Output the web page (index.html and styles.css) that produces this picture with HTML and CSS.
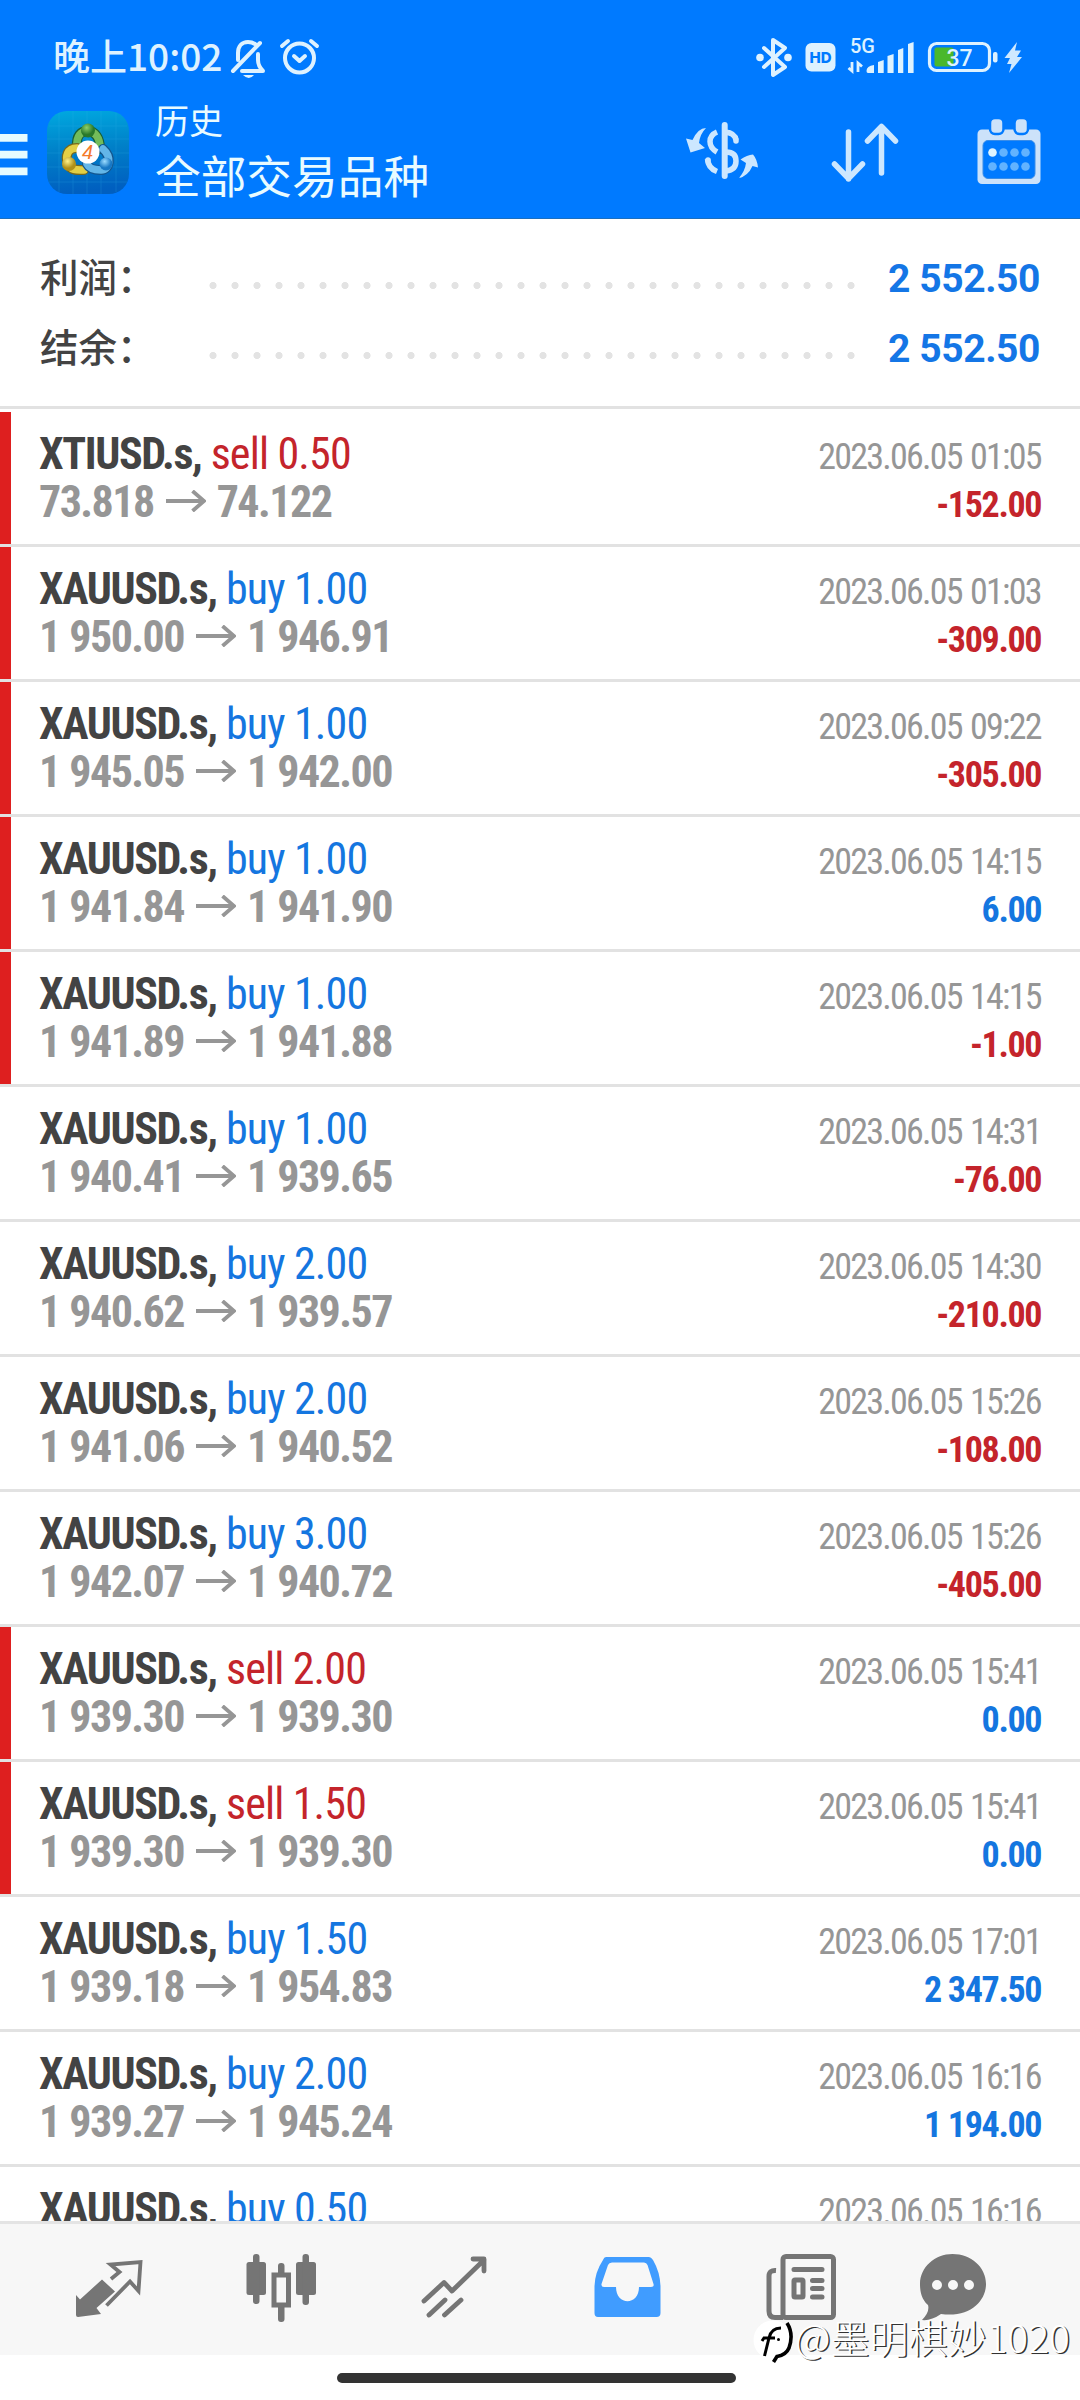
FILE: index.html
```html
<!DOCTYPE html>
<html lang="zh-CN">
<head>
<meta charset="utf-8">
<title>历史</title>
<link rel="stylesheet" href="styles.css">
</head>
<body>
<div class="screen">
  <header class="header">
    <div class="status">
      <span class="clock">晚上10:02</span>
      <svg class="bell" width="38" height="44" viewBox="230 35 38 44" fill="none" stroke="#def2ff" stroke-width="4" stroke-linecap="round" stroke-linejoin="round"><path d="M233 71 260 43M238 60V53C238 46 242 42 248 42Q252 42 255 44M242 71H263Q258 66 258 60V54"/><path d="M243 75H254Q249 81 243 75Z" fill="#def2ff" stroke="none"/></svg>
      <svg class="alarm" width="42" height="44" viewBox="279 35 42 44" fill="none" stroke="#def2ff" stroke-width="4" stroke-linecap="round" stroke-linejoin="round"><circle cx="299.500" cy="58" r="14.500"/><path d="m294 56 5.500 5 5.500-5M282 46 288 41M317 46 311 41"/></svg>
      <svg class="bt" width="38" height="44" viewBox="755 35 38 44" fill="none" stroke="#def2ff" stroke-width="4" stroke-linejoin="round" stroke-linecap="round"><path d="m764 48 21 19-12 8V40l12 8-21 19"/><g fill="#def2ff" stroke="none"><circle cx="760" cy="57.500" r="3.800"/><circle cx="788" cy="57.500" r="3.800"/></g></svg>
      <svg class="hd" width="31" height="44" viewBox="804.500 35 31 44"><rect x="805" y="43" width="30" height="28.500" rx="6" fill="#def2ff"/><text x="820" y="63" text-anchor="middle" class="hd-text">HD</text></svg>
      <svg class="signal" width="68" height="44" viewBox="847 35 68 44" fill="#def2ff"><text x="850" y="53" class="net-text">5G</text><path d="M866.500 71Q866.500 66 874 65V73H868Q866.500 73 866.500 71ZM878 62 883.700 60V73H878ZM887.500 56 893.600 54V73H887.500ZM898 50 903.300 48V73H898ZM908 44 913.600 42V73H908Z"/><path d="M852 62V71L848.500 68M858 72V63L862 66.500" fill="none" stroke="#def2ff" stroke-width="2.800"/></svg>
      <svg class="battery" width="72" height="44" viewBox="927 35 72 44"><rect x="934.500" y="47.500" width="19" height="19" rx="2" fill="#4ab82c"/><rect x="929.500" y="43.500" width="60" height="27" rx="7" fill="none" stroke="#def2ff" stroke-width="3.200"/><rect x="993" y="52" width="4.500" height="10.500" rx="2" fill="#def2ff"/><text x="959.500" y="66" text-anchor="middle" class="bat-text">37</text></svg>
      <svg class="bolt" width="20" height="44" viewBox="1004 35 20 44" fill="#cfe9ff"><path d="M1017 42 1004.500 58H1010L1007 64H1011.500L1009 73 1022 57H1017L1021 50.500H1015Z"/></svg>
    </div>
    <div class="toolbar">
      <svg class="menu" width="28" height="42" viewBox="0 0 28 42" fill="#e6fbff"><path d="M0 0H27.500V7.800H0ZM0 16.800H27.500V24.400H0ZM0 33.600H27.500V41.200H0Z"/></svg>
      <svg class="logo" width="82" height="83" viewBox="0 0 82 83">
        <defs>
          <linearGradient id="bg" x2="0.100" y2="1"><stop stop-color="#00a9e0"/><stop offset=".5" stop-color="#0080c8"/><stop offset="1" stop-color="#005fc0"/></linearGradient>
          <radialGradient id="gr" cx=".4" cy=".3"><stop stop-color="#8fd06a"/><stop offset="1" stop-color="#28792b"/></radialGradient>
          <radialGradient id="ye" cx=".4" cy=".3"><stop stop-color="#fff38a"/><stop offset="1" stop-color="#b09018"/></radialGradient>
          <radialGradient id="bl" cx=".4" cy=".3"><stop stop-color="#9bdcff"/><stop offset="1" stop-color="#1878c4"/></radialGradient>
        </defs>
        <rect width="82" height="83" rx="20" fill="url(#bg)"/>
        <path d="M12 2V81M26 0V83M40 0V83M54 0V83M69 2V81M2 15H80M0 28H82M0 42H82M0 56H82M2 71H80" stroke="#35b5eb" stroke-width=".7" opacity=".3"/>
        <g stroke-linecap="round" fill="none">
          <path d="M30 36C29 24 34 20 41 20S53 27 53 38" stroke="#185f36" stroke-width="10"/>
          <path d="M30 36C29 25 34 20 41 20S53 27 53 37" stroke="#73bc5a" stroke-width="7.500"/>
          <path d="M30 37C20 37 18 46 21 53S31 59 37 59" stroke="#77681d" stroke-width="10"/>
          <path d="M30 37C20 37 18 46 21 53S31 59 37 59" stroke="#e3cf45" stroke-width="7.500"/>
          <path d="M56 38C65 46 63 59 54 59S42 57 40 53" stroke="#14568e" stroke-width="10"/>
          <path d="M56 38C65 46 63 59 54 59S42 57 40 53" stroke="#63b6e8" stroke-width="7.500"/>
        </g>
        <circle cx="41" cy="19.500" r="7" fill="url(#gr)"/><circle cx="22" cy="53" r="7" fill="url(#ye)"/><circle cx="59" cy="53" r="6.500" fill="url(#bl)"/>
        <circle cx="41" cy="41" r="11.500" fill="#fff"/><text x="40.500" y="48" text-anchor="middle" class="logo-text">4</text>
      </svg>
      <div class="titles"><div class="title">历史</div><div class="subtitle">全部交易品种</div></div>
      <svg class="currency" width="74" height="60" viewBox="685 122 74 60" fill="none" stroke="#cce7ff" stroke-width="5.500"><path d="M724.700 126V177" stroke-width="6" stroke-linecap="round"/><path d="M717 133Q710 136 710 142.500T717 153M707.500 160Q708 169 717 172.500M725 133Q735 134 736 141" /><path d="M736 141V142" stroke-linecap="round"/><path d="M708 162V161" stroke-linecap="round"/><path d="M726 153Q736 153 736 162T726 172"/><g fill="#cce7ff" stroke="none"><path d="M706 129Q698 129 692.500 141L686 139.500 690.500 153.500 705 149 699 144Q700 135 706 129Z"/><path d="M739 179Q748 177 752.500 167L758 168.500Q757 160 753 155.500 747 156 740.500 160.500L746 164Q745 172 739 179Z"/></g></svg>
      <svg class="sort" width="70" height="62" viewBox="830 122 70 62" fill="none" stroke="#cce7ff" stroke-width="5.500" stroke-linecap="round" stroke-linejoin="round"><path d="M848.500 132V179M834.500 164 848.500 178.500 862.500 164M881.500 173V127M867.500 141 881.500 126.500 895.500 141"/></svg>
      <svg class="calendar" width="64" height="68" viewBox="976.500 118 64 68"><rect x="977" y="129.500" width="63" height="54.500" rx="4.500" fill="#cce2fa"/><rect x="982.500" y="140.500" width="52" height="38" rx="5" fill="#007aff" stroke="#3a8de8"/><g fill="#cce2fa" stroke="#007aff" stroke-width="2.500"><rect x="989.500" y="118" width="13.500" height="16" rx="5"/><rect x="1014" y="118" width="13.500" height="16" rx="5"/></g><g fill="#62b3ff"><circle cx="1003" cy="152.500" r="4.300"/><circle cx="1014" cy="152.500" r="4.300"/><circle cx="1025" cy="152.500" r="4.300"/><circle cx="992" cy="166.500" r="4.300"/><circle cx="1003" cy="166.500" r="4.300"/><circle cx="1014" cy="166.500" r="4.300"/><circle cx="1025" cy="166.500" r="4.300"/></g><circle cx="992" cy="152.500" r="4.300" fill="#def4ff"/></svg>
    </div>
  </header>

  <section class="summary">
    <div class="sum-row"><span class="sum-label">利润：</span><span class="dots"></span><span class="sum-value">2 552.50</span></div>
    <div class="sum-row"><span class="sum-label">结余：</span><span class="dots"></span><span class="sum-value">2 552.50</span></div>
  </section>

  <svg class="defs" width="0" height="0"><symbol id="arrow" viewBox="0 0 40 22"><path d="M0 11H38M26.500 1 38 11 26.500 21" fill="none" stroke="#969696" stroke-width="3.800"/></symbol></svg>

  <main class="deals">
    <article class="deal marked"><div class="line"><span class="name"><b>XTIUSD.s,</b> <span class="sell">sell 0.50</span></span><time>2023.06.05 01:05</time></div><div class="line"><span class="prices">73.818<svg class="arrow"><use href="#arrow"/></svg>74.122</span><span class="profit loss">-152.00</span></div></article>
    <article class="deal marked"><div class="line"><span class="name"><b>XAUUSD.s,</b> <span class="buy">buy 1.00</span></span><time>2023.06.05 01:03</time></div><div class="line"><span class="prices">1 950.00<svg class="arrow"><use href="#arrow"/></svg>1 946.91</span><span class="profit loss">-309.00</span></div></article>
    <article class="deal marked"><div class="line"><span class="name"><b>XAUUSD.s,</b> <span class="buy">buy 1.00</span></span><time>2023.06.05 09:22</time></div><div class="line"><span class="prices">1 945.05<svg class="arrow"><use href="#arrow"/></svg>1 942.00</span><span class="profit loss">-305.00</span></div></article>
    <article class="deal marked"><div class="line"><span class="name"><b>XAUUSD.s,</b> <span class="buy">buy 1.00</span></span><time>2023.06.05 14:15</time></div><div class="line"><span class="prices">1 941.84<svg class="arrow"><use href="#arrow"/></svg>1 941.90</span><span class="profit">6.00</span></div></article>
    <article class="deal marked"><div class="line"><span class="name"><b>XAUUSD.s,</b> <span class="buy">buy 1.00</span></span><time>2023.06.05 14:15</time></div><div class="line"><span class="prices">1 941.89<svg class="arrow"><use href="#arrow"/></svg>1 941.88</span><span class="profit loss">-1.00</span></div></article>
    <article class="deal"><div class="line"><span class="name"><b>XAUUSD.s,</b> <span class="buy">buy 1.00</span></span><time>2023.06.05 14:31</time></div><div class="line"><span class="prices">1 940.41<svg class="arrow"><use href="#arrow"/></svg>1 939.65</span><span class="profit loss">-76.00</span></div></article>
    <article class="deal"><div class="line"><span class="name"><b>XAUUSD.s,</b> <span class="buy">buy 2.00</span></span><time>2023.06.05 14:30</time></div><div class="line"><span class="prices">1 940.62<svg class="arrow"><use href="#arrow"/></svg>1 939.57</span><span class="profit loss">-210.00</span></div></article>
    <article class="deal"><div class="line"><span class="name"><b>XAUUSD.s,</b> <span class="buy">buy 2.00</span></span><time>2023.06.05 15:26</time></div><div class="line"><span class="prices">1 941.06<svg class="arrow"><use href="#arrow"/></svg>1 940.52</span><span class="profit loss">-108.00</span></div></article>
    <article class="deal"><div class="line"><span class="name"><b>XAUUSD.s,</b> <span class="buy">buy 3.00</span></span><time>2023.06.05 15:26</time></div><div class="line"><span class="prices">1 942.07<svg class="arrow"><use href="#arrow"/></svg>1 940.72</span><span class="profit loss">-405.00</span></div></article>
    <article class="deal marked"><div class="line"><span class="name"><b>XAUUSD.s,</b> <span class="sell">sell 2.00</span></span><time>2023.06.05 15:41</time></div><div class="line"><span class="prices">1 939.30<svg class="arrow"><use href="#arrow"/></svg>1 939.30</span><span class="profit">0.00</span></div></article>
    <article class="deal marked"><div class="line"><span class="name"><b>XAUUSD.s,</b> <span class="sell">sell 1.50</span></span><time>2023.06.05 15:41</time></div><div class="line"><span class="prices">1 939.30<svg class="arrow"><use href="#arrow"/></svg>1 939.30</span><span class="profit">0.00</span></div></article>
    <article class="deal"><div class="line"><span class="name"><b>XAUUSD.s,</b> <span class="buy">buy 1.50</span></span><time>2023.06.05 17:01</time></div><div class="line"><span class="prices">1 939.18<svg class="arrow"><use href="#arrow"/></svg>1 954.83</span><span class="profit">2 347.50</span></div></article>
    <article class="deal"><div class="line"><span class="name"><b>XAUUSD.s,</b> <span class="buy">buy 2.00</span></span><time>2023.06.05 16:16</time></div><div class="line"><span class="prices">1 939.27<svg class="arrow"><use href="#arrow"/></svg>1 945.24</span><span class="profit">1 194.00</span></div></article>
    <article class="deal"><div class="line"><span class="name"><b>XAUUSD.s,</b> <span class="buy">buy 0.50</span></span><time>2023.06.05 16:16</time></div></article>
  </main>

  <nav class="tabs">
    <svg width="70" height="70" viewBox="73 2253 70 70"><path d="M76 2295 80 2299.500 102 2279.500 115 2291.500 96.500 2308 101 2314 78 2317Q76 2317 76 2315Z" fill="#757575"/><path d="m111 2279 8.500-7-9-7.500 30-2.500-2 29-8.500-9.500-23.500 24" fill="none" stroke="#757575" stroke-width="3.800"/></svg>
    <svg width="72" height="70" viewBox="245 2253 72 70" fill="#757575"><rect x="246.500" y="2262" width="19.500" height="33" rx="2.500"/><rect x="253" y="2254" width="6.500" height="50" rx="3"/><rect x="296" y="2262" width="20" height="33" rx="2.500"/><rect x="302.500" y="2254" width="6.500" height="51" rx="3"/><rect x="278" y="2263" width="6.500" height="59" rx="3"/><rect x="274" y="2275" width="14.500" height="30" fill="#f7f7f7" stroke="#757575" stroke-width="5"/></svg>
    <svg width="68" height="70" viewBox="420 2253 68 70" fill="none" stroke="#757575" stroke-width="4.800" stroke-linecap="round" stroke-linejoin="round"><path d="m424 2301 20-18.500 8 8.500 32-31M473 2259H484V2271M429 2315 445 2300M444.500 2315 461 2300"/></svg>
    <svg width="68" height="70" viewBox="593 2253 68 70"><path fill="#409cff" fill-rule="evenodd" d="M606 2257H649Q651 2257 653 2260 660 2272 660.500 2286V2313Q660.500 2317 656.500 2317H598Q594.500 2317 594.500 2313V2286Q595 2272 603 2260 604 2257 606 2257ZM612 2262.500Q609 2262.500 608 2265L601.500 2284Q601 2287 604 2287H616C616 2306 639 2306 639 2287H651Q654.500 2287 653.500 2284L647.500 2265Q646.500 2262.500 644 2262.500Z"/></svg>
    <svg width="72" height="70" viewBox="765 2253 72 70" fill="none" stroke="#757575" stroke-width="5"><rect x="783" y="2256.500" width="50.500" height="61" rx="3"/><path d="M776 2270.500Q769 2270 769 2276V2311Q769 2317.500 775 2317.500H783"/><path d="M794 2269.500H822M812.500 2280.500H822M812.500 2288.500H822M812.500 2297H822" stroke-linecap="round"/><rect x="794" y="2280" width="9" height="17" rx="1"/></svg>
    <svg width="68" height="70" viewBox="919 2253 68 70"><path fill="#757575" fill-rule="evenodd" d="M952.500 2254C971 2254 986 2267 986 2284S970 2318 941 2314Q931 2321 922 2320 930 2312 928 2305C921 2299 920 2290 920 2284 920 2267 935 2254 952.500 2254ZM937 2280A5 5 0 1 0 937 2290A5 5 0 1 0 937 2280ZM953 2280A5 5 0 1 0 953 2290A5 5 0 1 0 953 2280ZM969 2280A5 5 0 1 0 969 2290A5 5 0 1 0 969 2280Z"/></svg>
  </nav>
  <footer class="gesture"><div class="pill"></div></footer>

  <div class="watermark">
    <svg width="42" height="44" viewBox="753 2320 42 44"><circle cx="773" cy="2340" r="19.500" fill="#fff"/><path d="M787 2323Q794 2334 789 2348 786 2355 777 2356.500L773.500 2362" fill="none" stroke="#000" stroke-width="3.600"/><path d="M781 2328Q771 2328 769 2338L764.500 2356M762 2341 764 2338H775" fill="none" stroke="#000" stroke-width="3"/><circle cx="778.500" cy="2339.500" r="1.500"/></svg>
    <span class="handle">@墨明棋妙1020</span>
  </div>
</div>
</body>
</html>
```
FILE: styles.css
```css
* { box-sizing: border-box; }
body { margin: 0; background: #fff; }
svg { display: block; flex: none; }

.screen {
  position: relative;
  display: flex;
  flex-direction: column;
  width: 1080px;
  height: 2400px;
  overflow: hidden;
  font-family: Roboto, "Noto Sans CJK SC", sans-serif;
  color: #434343;
}

/* Header */
.header { height: 219px; flex: none; padding-top: 35px; background: #007aff; color: #e9fbff; border-bottom: 1px solid #1b6fc0; }
.status { display: flex; align-items: center; height: 44px; padding-left: 53px; }
.clock { width: 177px; margin-bottom: 4px; font: 500 37px/44px "Noto Sans CJK SC", sans-serif; white-space: nowrap; color: #def2ff; }
.alarm { margin-left: 11px; }
.bt { margin-left: 434px; }
.hd { margin-left: 11.5px; }
.signal { margin-left: 11.5px; }
.battery { margin-left: 12px; }
.bolt { margin-left: 5px; }
.hd-text { font: 800 15px Inter, sans-serif; fill: #007aff; }
.net-text { font: 500 20px Roboto, sans-serif; }
.bat-text { font: 500 23px Roboto, sans-serif; fill: #def2ff; }

.toolbar { display: flex; align-items: center; height: 125px; margin-top: 11px; }
.menu { margin-top: 4px; }
.logo { margin-left: 19px; }
.logo-text { font: italic 500 20px "Liberation Sans", sans-serif; fill: #f47a2a; }
.titles { width: 529px; margin-left: 26px; margin-bottom: 3px; font-family: "Noto Sans CJK SC", sans-serif; }
.title { font-size: 34px; line-height: 40px; margin-bottom: 6px; }
.subtitle { font-size: 45.7px; line-height: 56px; }
.currency { margin-left: 1px; margin-bottom: 3px; }
.sort { margin-left: 71px; }
.calendar { margin-left: 76.5px; margin-bottom: 1px; }

/* Totals */
.summary { height: 190px; flex: none; padding: 24px 40px 0; border-bottom: 3px solid #e2e2e2; }
.sum-row { display: flex; align-items: center; height: 70px; }
.sum-label { width: 162px; margin-bottom: 7px; font: 500 38.5px/62px "Noto Sans CJK SC", sans-serif; }
.dots { width: 660px; height: 7px; margin-top: 15px; background: radial-gradient(circle, #e3e3e3 3.2px, transparent 3.9px) 0 0 / 22px 7px; }
.sum-value { flex: 1; padding-top: 2px; text-align: right; font-size: 39px; font-weight: 700; letter-spacing: -0.4px; color: #1476e6; white-space: nowrap; }

/* Deal list */
.deals { height: 1812px; flex: none; padding-top: 3px; overflow: hidden; }
.deal { height: 135px; padding: 18px 38px 0 39px; border-bottom: 3px solid #e2e2e2; }
.marked { background: linear-gradient(#de1f1f, #de1f1f) 0 0 / 11px 100% no-repeat; }
.line { display: flex; justify-content: space-between; align-items: baseline; height: 48px; line-height: 48px; font-stretch: 75%; white-space: nowrap; }
.name { font-size: 44px; letter-spacing: -0.85px; }
.name b { font-weight: 700; letter-spacing: -1.4px; }
.sell { color: #c4242b; }
.buy { color: #1476e0; }
time { font-size: 36px; letter-spacing: -1.78px; word-spacing: 2px; padding-right: 1.3px; color: #969696; }
.prices { font-size: 44px; font-weight: 700; letter-spacing: -1.55px; word-spacing: 1px; color: #969696; }
.arrow { display: inline-block; width: 40px; height: 22px; margin: 0 11px 5px 12px; }
.profit { font-size: 36px; font-weight: 700; letter-spacing: -1.35px; padding-right: 0.8px; color: #1476e0; }
.loss { color: #c4242b; }

/* Tab bar */
.tabs { display: flex; align-items: flex-start; height: 134px; flex: none; padding: 29px 0 0 73px; border-top: 3px solid #e4e4e4; background: #f7f7f7; gap: 104px; }
.tabs svg:nth-child(2) { margin-left: -2px; }
.tabs svg:nth-child(3) { margin-left: -1px; }
.tabs svg:nth-child(4) { margin-left: 1px; }
.tabs svg:nth-child(6) { margin-left: -22px; }
.gesture { display: flex; padding: 18px 0 0 337px; height: 45px; }
.pill { width: 399px; height: 10px; border-radius: 5px; background: #333; }
.watermark { position: absolute; left: 753px; top: 2320px; display: flex; align-items: flex-start; height: 44px; }
.handle { margin: -6px 0 0 0; font: 300 39px/44px "Noto Sans CJK SC", sans-serif; color: #fff; text-shadow: 1.5px 1px 0 #333; white-space: nowrap; }
```
